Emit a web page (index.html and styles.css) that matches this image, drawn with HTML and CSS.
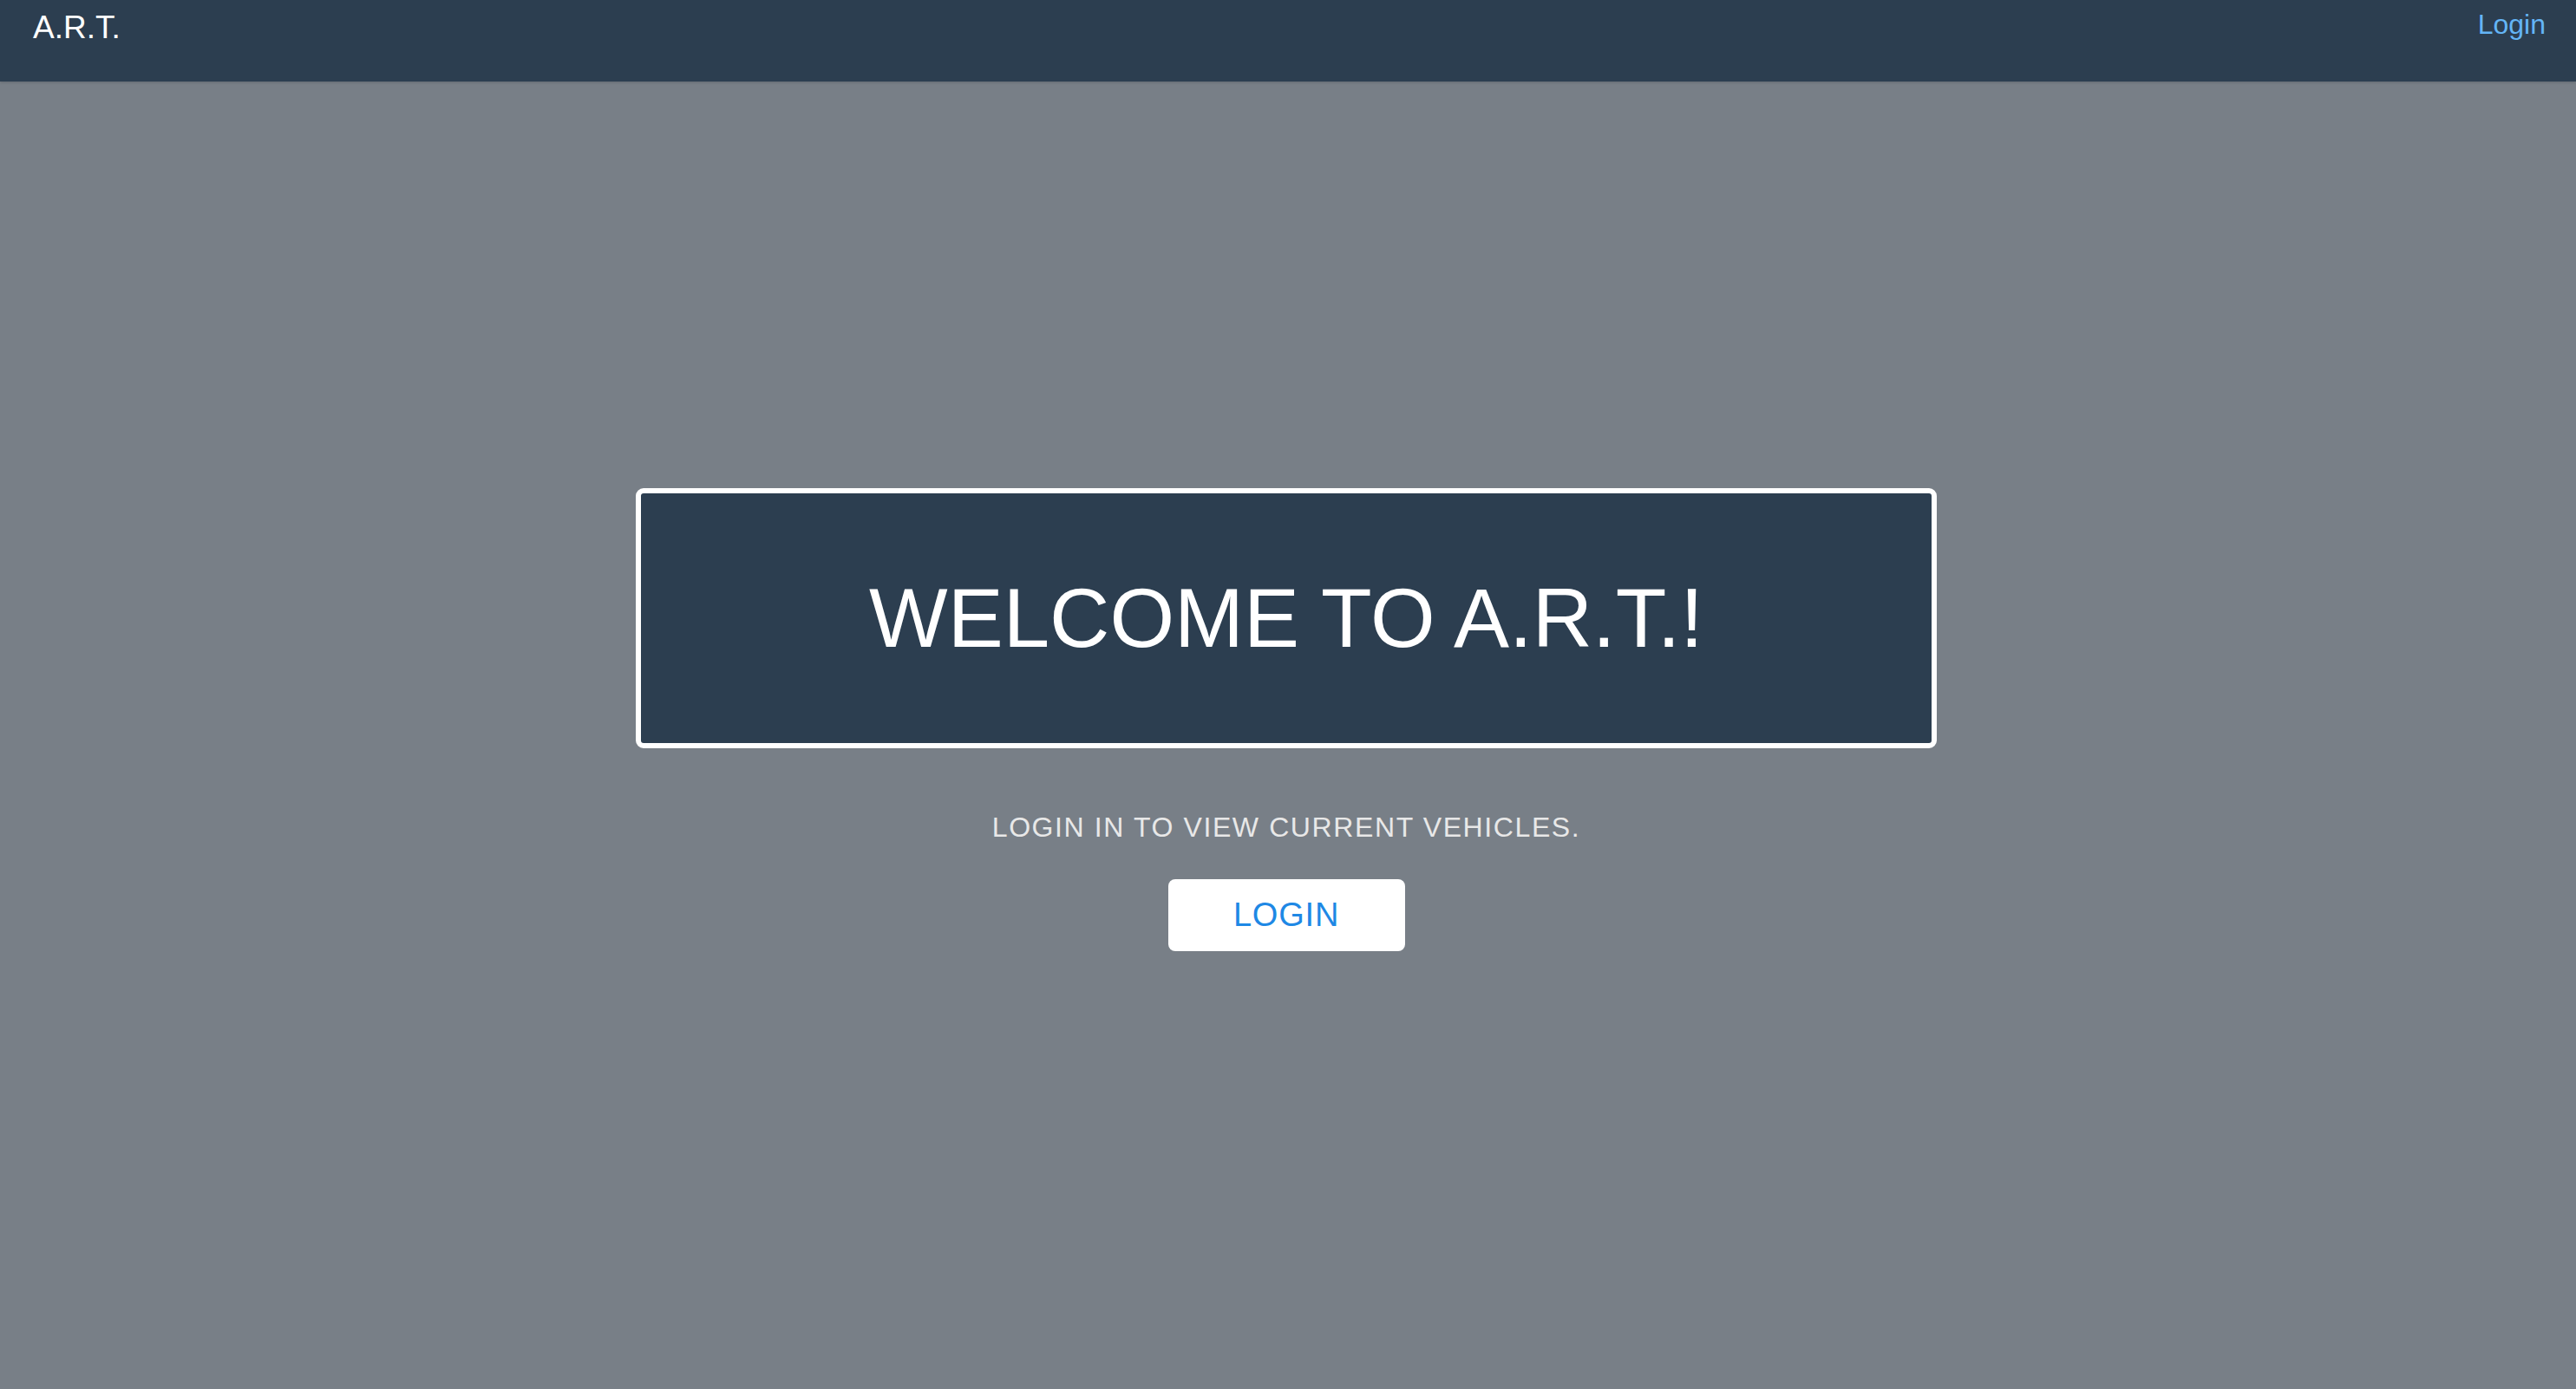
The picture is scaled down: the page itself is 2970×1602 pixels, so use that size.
FILE: index.html
```html
<!DOCTYPE html>
<html lang="en">
<head>
<meta charset="utf-8">
<title>A.R.T.</title>
<link rel="stylesheet" href="styles.css">
</head>
<body>
  <header class="topbar">
    <a class="brand" href="#">A.R.T.</a>
    <a class="nav-login" href="#">Login</a>
  </header>
  <main class="hero">
    <div class="welcome-box">
      <h1 class="welcome-title">WELCOME TO A.R.T.!</h1>
    </div>
    <p class="subtitle">LOGIN IN TO VIEW CURRENT VEHICLES.</p>
    <button class="login-btn" type="button">LOGIN</button>
  </main>
</body>
</html>
```
FILE: styles.css
```css
html, body {
  margin: 0;
  padding: 0;
}

body {
  min-height: 100vh;
  display: flex;
  flex-direction: column;
  background: #787f87;
  font-family: "Liberation Sans", Arial, sans-serif;
}

.topbar {
  height: 94px;
  flex: 0 0 94px;
  box-sizing: border-box;
  display: flex;
  justify-content: space-between;
  align-items: flex-start;
  padding: 0 35px 0 38px;
  background: #2c3e50;
  box-shadow: 0 1px 3px rgba(0, 0, 0, 0.18);
  position: relative;
  z-index: 1;
}

.brand {
  color: #ffffff;
  text-decoration: none;
  font-size: 37px;
  line-height: 1;
  padding-top: 13px;
}

.nav-login {
  color: #64b5f6;
  text-decoration: none;
  font-size: 32px;
  line-height: 1;
  padding-top: 12px;
}

.hero {
  flex: 1;
  display: flex;
  flex-direction: column;
  align-items: center;
  justify-content: center;
  padding-right: 4px;
}

.welcome-box {
  width: 1500px;
  height: 300px;
  box-sizing: border-box;
  border: 6px solid #ffffff;
  border-radius: 9px;
  background: #2c3e50;
  display: flex;
  align-items: center;
  justify-content: center;
}

.welcome-title {
  margin: 0;
  color: #ffffff;
  font-size: 96px;
  font-weight: normal;
  line-height: 1;
}

.subtitle {
  margin: 75px 0 0;
  color: #e8e8e8;
  font-size: 32px;
  line-height: 1;
  letter-spacing: 1.6px;
}

.login-btn {
  margin: 44px 0 36px;
  width: 273px;
  height: 83px;
  border: none;
  border-radius: 8px;
  background: #ffffff;
  color: #1e88e5;
  font-family: "Liberation Sans", Arial, sans-serif;
  font-size: 38px;
  letter-spacing: 0.8px;
  display: flex;
  align-items: center;
  justify-content: center;
  padding: 0;
  cursor: pointer;
}
```
